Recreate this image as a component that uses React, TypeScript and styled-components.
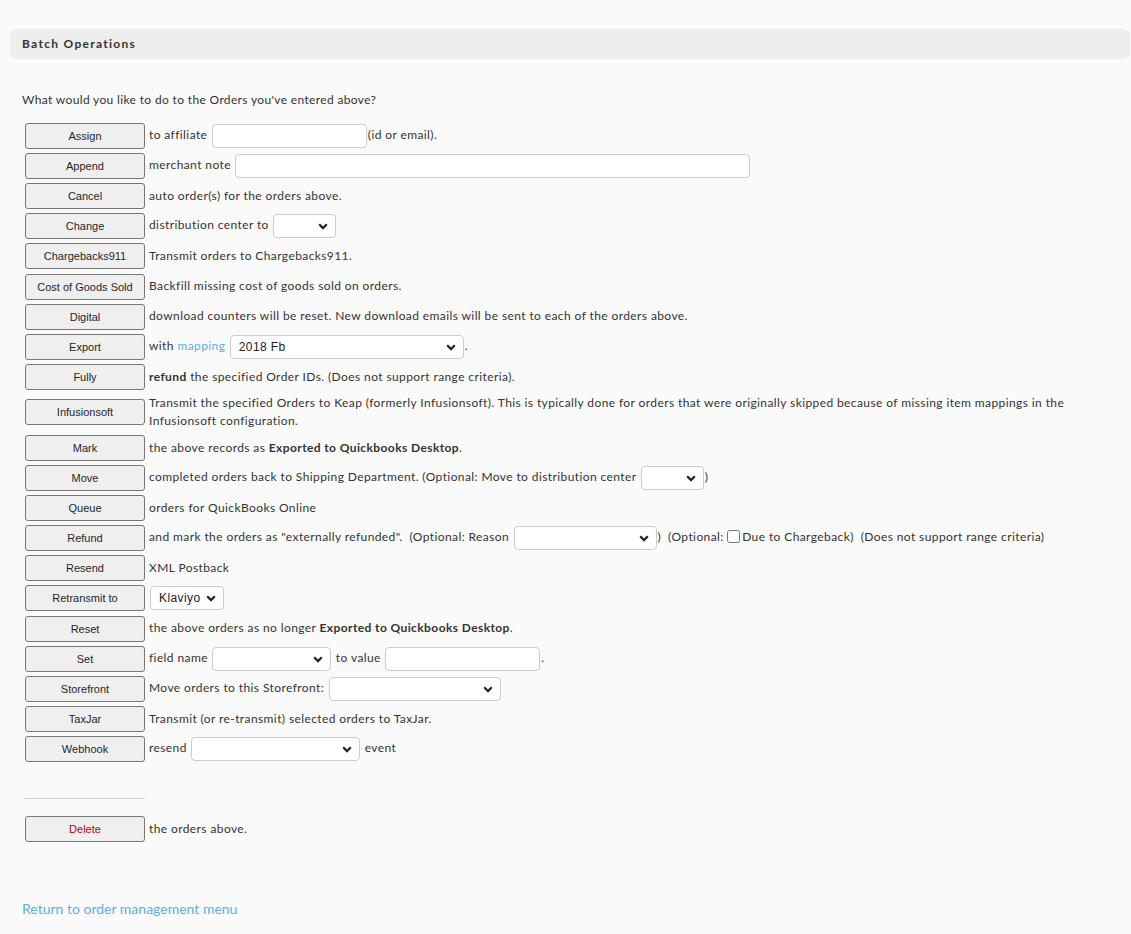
import styled, { createGlobalStyle } from "styled-components";

const GlobalStyle = createGlobalStyle`
  body {
    margin: 0;
    background: #fafafa;
    font-family: Lato, "Open Sans", sans-serif;
    color: #333;
  }
`;

const Page = styled.div`
  padding: 29px 1px 20px 10px;
`;

const SectionHeader = styled.div`
  height: 30px;
  display: flex;
  align-items: center;
  padding-left: 12px;
  background: #eeeeee;
  border-radius: 6px;
  font-size: 12px;
  font-weight: 700;
  letter-spacing: 1.3px;
  color: #333;
  padding-bottom: 1px;
  box-sizing: border-box;
`;

const Content = styled.div`
  padding: 0 12px;
`;

const Intro = styled.p`
  margin: 33px 0 14px;
  font-size: 12px;
  letter-spacing: 0.35px;
`;

const OpsTable = styled.table`
  border-collapse: collapse;
  border-spacing: 0;
  margin-left: 1px;
  td {
    padding: 2.05px 2px;
    vertical-align: middle;
    font-size: 12px;
    line-height: 18.5px;
    letter-spacing: 0.4px;
  }
  td:first-child {
    width: 120px;
  }
`;

const OpButton = styled.button<{ $danger?: boolean }>`
  width: 120px;
  height: 26px;
  display: block;
  background: #efefef;
  border: 1px solid #767676;
  border-radius: 3px;
  font-family: "Liberation Sans", Arial, sans-serif;
  font-size: 11px;
  color: ${(p) => (p.$danger ? "#c00000" : "#1f1f1f")};
  padding: 0;
`;

const TextInput = styled.input<{ $w: number }>`
  width: ${(p) => p.$w}px;
  height: 24px;
  box-sizing: border-box;
  border: 1px solid #cccccc;
  border-radius: 4px;
  background: #fff;
  vertical-align: middle;
  margin: 0 1px;
`;

const SelectWrap = styled.span`
  position: relative;
  display: inline-block;
  vertical-align: middle;
  margin: 0 1px;
`;

const Select = styled.select<{ $w: number }>`
  appearance: none;
  width: ${(p) => p.$w}px;
  height: 24px;
  box-sizing: border-box;
  border: 1px solid #cccccc;
  border-radius: 4px;
  background: #fff;
  padding: 0 20px 0 8px;
  font-family: "Liberation Sans", Arial, sans-serif;
  font-size: 12px;
  letter-spacing: 0.4px;
  color: #222;
  display: block;
`;

const Chevron = styled.svg`
  position: absolute;
  right: 8px;
  top: 9px;
  width: 10px;
  height: 7px;
  pointer-events: none;
`;

const Link = styled.a`
  color: #5aafe4;
  text-decoration: none;
`;

const Check = styled.input`
  width: 13px;
  height: 13px;
  margin: 0 2px 0 0;
  vertical-align: -2px;
`;

const SepCell = styled.td`
  && {
    padding-top: 34px;
    padding-bottom: 15px;
  }
  hr {
    margin: 0;
    border: none;
    border-top: 1px solid #cfcfcf;
  }
`;

const BackLink = styled.a`
  display: inline-block;
  margin-top: 56px;
  font-size: 14px;
  color: #5aafe4;
  text-decoration: none;
`;

const DropDown = ({ w, value }: { w: number; value?: string }) => (
  <SelectWrap>
    <Select $w={w} defaultValue={value ?? ""}>
      <option value={value ?? ""}>{value ?? ""}</option>
    </Select>
    <Chevron viewBox="0 0 10 7">
      <path d="M1.2 1.3 L5 5.1 L8.8 1.3" fill="none" stroke="#222" strokeWidth="2.2" />
    </Chevron>
  </SelectWrap>
);

const App = () => {
  return (
    <>
      <GlobalStyle />
      <Page>
        <SectionHeader>Batch Operations</SectionHeader>
        <Content>
          <Intro>What would you like to do to the Orders you've entered above?</Intro>
          <OpsTable>
            <tbody>
              <tr>
                <td><OpButton>Assign</OpButton></td>
                <td>to affiliate <TextInput $w={155} />(id or email).</td>
              </tr>
              <tr>
                <td><OpButton>Append</OpButton></td>
                <td>merchant note <TextInput $w={515} /></td>
              </tr>
              <tr>
                <td><OpButton>Cancel</OpButton></td>
                <td>auto order(s) for the orders above.</td>
              </tr>
              <tr>
                <td><OpButton>Change</OpButton></td>
                <td>distribution center to <DropDown w={63} /></td>
              </tr>
              <tr>
                <td><OpButton>Chargebacks911</OpButton></td>
                <td>Transmit orders to Chargebacks911.</td>
              </tr>
              <tr>
                <td><OpButton>Cost of Goods Sold</OpButton></td>
                <td>Backfill missing cost of goods sold on orders.</td>
              </tr>
              <tr>
                <td><OpButton>Digital</OpButton></td>
                <td>download counters will be reset. New download emails will be sent to each of the orders above.</td>
              </tr>
              <tr>
                <td><OpButton>Export</OpButton></td>
                <td>
                  with <Link href="#">mapping</Link> <DropDown w={234} value="2018 Fb" />.
                </td>
              </tr>
              <tr>
                <td><OpButton>Fully</OpButton></td>
                <td><b>refund</b> the specified Order IDs. (Does not support range criteria).</td>
              </tr>
              <tr>
                <td><OpButton>Infusionsoft</OpButton></td>
                <td>
                  Transmit the specified Orders to Keap (formerly Infusionsoft). This is typically done for orders that were originally skipped because of missing item mappings in the Infusionsoft configuration.
                </td>
              </tr>
              <tr>
                <td><OpButton>Mark</OpButton></td>
                <td>the above records as <b>Exported to Quickbooks Desktop</b>.</td>
              </tr>
              <tr>
                <td><OpButton>Move</OpButton></td>
                <td>
                  completed orders back to Shipping Department. (Optional: Move to distribution center <DropDown w={63} />)
                </td>
              </tr>
              <tr>
                <td><OpButton>Queue</OpButton></td>
                <td>orders for QuickBooks Online</td>
              </tr>
              <tr>
                <td><OpButton>Refund</OpButton></td>
                <td>
                  and mark the orders as "externally refunded".&nbsp; (Optional: Reason <DropDown w={143} />)&nbsp; (Optional: <Check type="checkbox" />Due to Chargeback)&nbsp; (Does not support range criteria)
                </td>
              </tr>
              <tr>
                <td><OpButton>Resend</OpButton></td>
                <td>XML Postback</td>
              </tr>
              <tr>
                <td><OpButton>Retransmit to</OpButton></td>
                <td><DropDown w={74} value="Klaviyo" /></td>
              </tr>
              <tr>
                <td><OpButton>Reset</OpButton></td>
                <td>the above orders as no longer <b>Exported to Quickbooks Desktop</b>.</td>
              </tr>
              <tr>
                <td><OpButton>Set</OpButton></td>
                <td>field name <DropDown w={119} /> to value <TextInput $w={155} />.</td>
              </tr>
              <tr>
                <td><OpButton>Storefront</OpButton></td>
                <td>Move orders to this Storefront: <DropDown w={172} /></td>
              </tr>
              <tr>
                <td><OpButton>TaxJar</OpButton></td>
                <td>Transmit (or re-transmit) selected orders to TaxJar.</td>
              </tr>
              <tr>
                <td><OpButton>Webhook</OpButton></td>
                <td>resend <DropDown w={169} /> event</td>
              </tr>
              <tr>
                <SepCell><hr /></SepCell>
                <td />
              </tr>
              <tr>
                <td><OpButton $danger>Delete</OpButton></td>
                <td>the orders above.</td>
              </tr>
            </tbody>
          </OpsTable>
          <BackLink href="#">Return to order management menu</BackLink>
        </Content>
      </Page>
    </>
  );
};

export default App;
